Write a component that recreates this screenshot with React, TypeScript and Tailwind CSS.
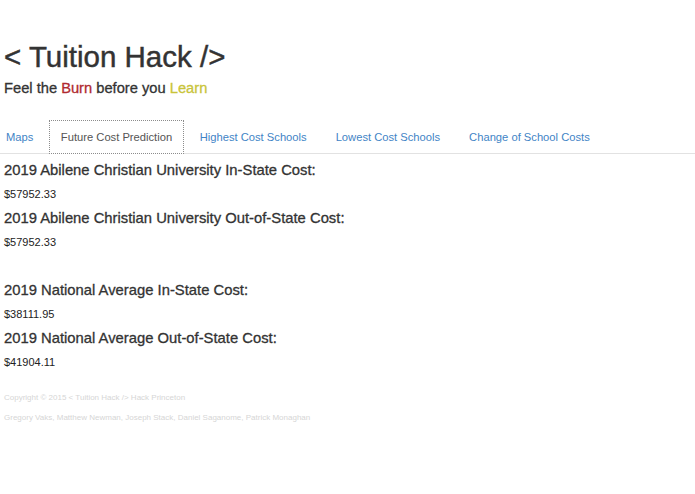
import React from 'react';

const tabs = ['Maps', 'Future Cost Prediction', 'Highest Cost Schools', 'Lowest Cost Schools', 'Change of School Costs'];

const rows: { label: string; value: string; gap?: boolean }[] = [
  { label: '2019 Abilene Christian University In-State Cost:', value: '$57952.33' },
  { label: '2019 Abilene Christian University Out-of-State Cost:', value: '$57952.33' },
  { label: '2019 National Average In-State Cost:', value: '$38111.95', gap: true },
  { label: '2019 National Average Out-of-State Cost:', value: '$41904.11' },
];

export default function App() {
  const active = 1;
  return (
    <div className="min-h-[494px] w-full overflow-hidden bg-white pl-[4px] text-[#333] [font-family:'Liberation_Sans',Arial,sans-serif]">
      <h1 className="pt-[40px] text-[29.5px] leading-[33px] font-normal text-[#333] [-webkit-text-stroke:0.45px_currentColor]">&lt; Tuition Hack /&gt;</h1>
      <h4 className="mt-[7px] text-[14.7px] leading-[16px] font-normal text-[#333] [-webkit-text-stroke:0.3px_currentColor]">
        Feel the <span className="text-[#b02a30]">Burn</span> before you <span className="text-[#c9c43a]">Learn</span>
      </h4>

      <ul className="-ml-[11.5px] mt-[24px] flex border-b border-[#e2e2e2]">
        {tabs.map((t, i) => (
          <li key={t} className="-mb-px mr-[2px]">
            <a
              className={
                i === active
                  ? 'block border border-dotted border-[#8c8c8c] bg-white px-[11px] py-[8px] text-[11.2px] leading-[16px] text-[#555]'
                  : 'block border border-transparent px-[12.5px] py-[8px] text-[11.2px] leading-[16px] text-[#3f84c6]'
              }
            >
              {t}
            </a>
          </li>
        ))}
      </ul>

      <div className="mt-[4px]">
        {rows.map((r) => (
          <div key={r.label} className={r.gap ? 'mt-[24px]' : ''}>
            <h4 className="text-[14.8px] leading-[24px] font-normal text-[#333] [-webkit-text-stroke:0.3px_currentColor]">{r.label}</h4>
            <p className="text-[11px] leading-[24px] text-[#222]">{r.value}</p>
          </div>
        ))}
      </div>

      <footer className="mt-[14px] text-[8px] leading-[20px] text-[#d6d6d6]">
        <p>Copyright © 2015 &lt; Tuition Hack /&gt; Hack Princeton</p>
        <p>Gregory Vaks, Matthew Newman, Joseph Stack, Daniel Saganome, Patrick Monaghan</p>
      </footer>
    </div>
  );
}
